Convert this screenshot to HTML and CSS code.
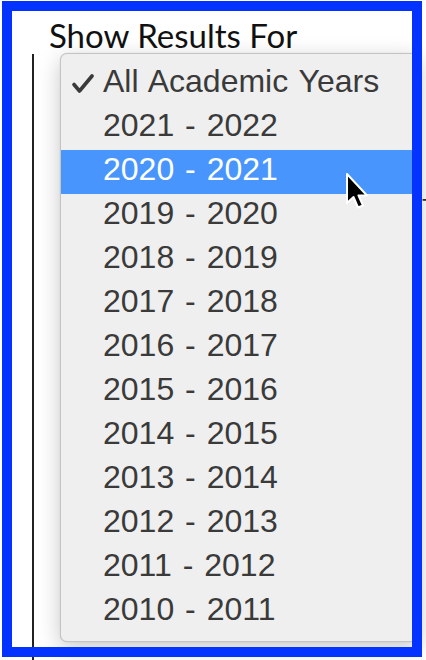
FILE: index.html
```html
<!DOCTYPE html>
<html>
<head>
<meta charset="utf-8">
<link rel="stylesheet" href="styles.css">
</head>
<body>
<div class="page">
  <h1 class="title">Show Results For</h1>
  <div class="panel">
    <div class="behind">Type</div>
  </div>
</div>

<div class="menu">
  <div class="item checked"><svg class="check" viewBox="0 0 22 20" width="22" height="20"><path d="M2 10.5 L7.5 17 L20 2" fill="none" stroke="#3a3a3a" stroke-width="3.6" stroke-linecap="round" stroke-linejoin="round"/></svg>All Academic Years</div>
  <div class="item">2021 - 2022</div>
  <div class="item active">2020 - 2021</div>
  <div class="item">2019 - 2020</div>
  <div class="item">2018 - 2019</div>
  <div class="item">2017 - 2018</div>
  <div class="item">2016 - 2017</div>
  <div class="item">2015 - 2016</div>
  <div class="item">2014 - 2015</div>
  <div class="item">2013 - 2014</div>
  <div class="item">2012 - 2013</div>
  <div class="item">2011 - 2012</div>
  <div class="item">2010 - 2011</div>
</div>

<svg class="cursor" width="26" height="38" viewBox="0 0 26 38">
  <path d="M2 1 L2 30 L8.5 24 L13 34.5 L18 32.5 L13.5 22.5 L22 22.5 Z" fill="#000" stroke="#fff" stroke-width="2" stroke-linejoin="round"/>
</svg>

<div class="frame"></div>
</body>
</html>
```
FILE: styles.css
```css
html, body {
  margin: 0;
  padding: 0;
  background: #ffffff;
  width: 426px;
  height: 660px;
  overflow: hidden;
}

.page {
  position: relative;
  width: 426px;
  height: 660px;
}

.title {
  margin: 0;
  padding: 16px 0 0 49px;
  font-family: Lato, "Open Sans", sans-serif;
  font-weight: 400;
  font-size: 33px;
  line-height: 38px;
  color: #111111;
  height: 38px;
}

.panel {
  margin-left: 32px;
  border-left: 2px solid #222222;
  height: 606px;
}

.behind {
  padding-top: 140px;
  padding-left: 388px;
  font-family: "Liberation Sans", Arial, sans-serif;
  font-size: 24px;
  color: #333;
  white-space: nowrap;
}

.menu {
  position: absolute;
  left: 60px;
  top: 53px;
  width: 358px;
  padding: 8px 0 7px 0;
  background: #efefef;
  border: 1px solid #c4c4c4;
  border-radius: 7px;
  box-shadow: 0 6px 22px rgba(0, 0, 0, 0.22), 0 0 1px rgba(0,0,0,0.2);
  font-family: "Liberation Sans", Arial, sans-serif;
  font-size: 32px;
  word-spacing: 2px;
  color: #3a3a3a;
}

.item {
  position: relative;
  height: 38px;
  line-height: 38px;
  padding: 0 0 6px 42px;
  white-space: nowrap;
}

.item.active {
  background: #4896fd;
  color: #ffffff;
}

.check {
  position: absolute;
  left: 11px;
  top: 12px;
}

.cursor {
  position: absolute;
  left: 345px;
  top: 173px;
}

.frame {
  position: absolute;
  left: 2px;
  top: 1px;
  width: 400px;
  height: 636px;
  border: 10px solid #0433ff;
  pointer-events: none;
}
```
